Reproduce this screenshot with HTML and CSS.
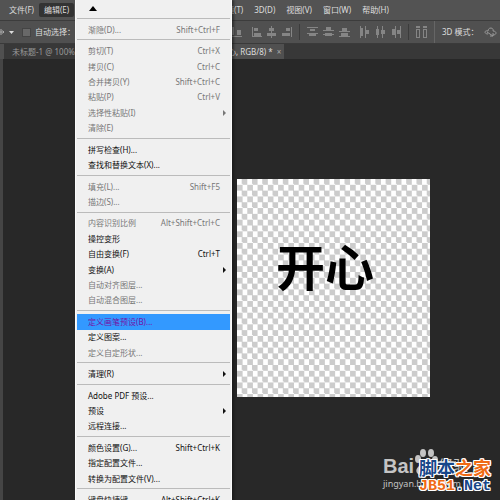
FILE: index.html
```html
<!DOCTYPE html>
<html lang="zh-CN">
<head>
<meta charset="utf-8">
<title>Photoshop</title>
<link rel="stylesheet" href="styles.css">
</head>
<body>
<div class="app">
  <nav class="menubar">
    <div class="lead">
      <button>文件(F)</button>
      <button class="open">编辑(E)</button>
    </div>
    <div class="rest">
      <button>镜(T)</button>
      <button>3D(D)</button>
      <button>视图(V)</button>
      <button>窗口(W)</button>
      <button>帮助(H)</button>
    </div>
  </nav>
  <div class="options">
    <div class="lead">
      <svg class="move" width="14" height="10" viewBox="0 0 14 10"><path d="M0 5h4M1 2v6M2.500 3.500L4 5L2.500 6.500" fill="none" stroke="#aaa"/><path d="M9 4h5l-2.500 3z" fill="#ddd"/></svg>
      <label><input type="checkbox">自动选择：</label>
    </div>
    <div class="rest tools">
      <svg width="10" height="12" viewBox="0 0 10 12"><path d="M0 1h2v8H0zM5 4h4v5H5zM0 10h10v1H0z"/></svg>
      <svg class="wide" width="10" height="12" viewBox="0 0 10 12"><path d="M0 1h1v10H0zM2 2h4v3H2zM2 7h7v3H2zM0 10h10v1H0z"/></svg>
      <svg width="10" height="12" viewBox="0 0 10 12"><path d="M4 0h1v12H4zM2 2h5v3H2zM0 7h9v3H0z"/></svg>
      <svg width="10" height="12" viewBox="0 0 10 12"><path d="M9 1h1v10H9zM4 2h4v3H4zM0 7h8v3H0z"/></svg>
      <i></i>
      <svg width="11" height="12" viewBox="0 0 11 12"><path d="M0 1h11v1H0zM3 3h5v2H3zM0 7h11v1H0zM2 8h7v2H2z"/></svg>
      <svg width="11" height="12" viewBox="0 0 11 12"><path d="M3 1h5v3H3zM0 4h11v1H0zM2 7h7v3H2zM0 8h11v1H0z"/></svg>
      <svg width="11" height="12" viewBox="0 0 11 12"><path d="M3 2h5v3H3zM0 5h11v1H0zM2 7h7v3H2zM0 10h11v1H0z"/></svg>
      <svg class="wide" width="9" height="12" viewBox="0 0 9 12"><path d="M0 0h1v12H0zM1 2h2v8H1zM5 0h1v12H5zM6 4h3v4H6z"/></svg>
      <svg class="gap" width="9" height="12" viewBox="0 0 9 12"><path d="M1 0h1v12H1zM0 3h3v6H0zM6 0h1v12H6zM5 4h4v4H5z"/></svg>
      <svg class="gap" width="9" height="12" viewBox="0 0 9 12"><path d="M3 0h1v12H3zM0 3h3v6H0zM8 0h1v12H8zM5 4h3v4H5z"/></svg>
      <i></i>
      <svg width="11" height="12" viewBox="0 0 11 12"><path d="M0 0h4v2H0zM7 0h4v2H7zM0 3h1v9H0zM3 3h1v9H3zM1 11h2v1H1zM1 3h2v1H1zM7 3h1v9H7zM10 3h1v9h-1zM8 11h2v1H8zM8 3h2v1H8z"/></svg>
      <i class="edge"></i>
      <span>3D 模式：</span>
      <svg width="13" height="12" viewBox="0 0 13 12"><path class="line" d="M4 8C0 8 0 4 4 5C4 1 10 1 9 5C13 5 13 9 9 9M3 6l6 4M6 10h3V7"/></svg>
      <svg width="13" height="12" viewBox="0 0 13 12"><circle class="line" cx="6" cy="6" r="5"/></svg>
    </div>
  </div>
  <div class="tabs">
    <div class="lead"><span>未标题-1 @ 100%</span></div>
    <div class="rest"><span class="tab">心, RGB/8) * <button aria-label="关闭">×</button></span></div>
  </div>
  <main class="workspace">
    <div class="canvas">开心</div>
  </main>

  <div class="menu">
    <div class="up"><svg width="8" height="5" viewBox="0 0 8 5"><path d="M0 5L4 0L8 5z"/></svg></div>
    <hr>
    <button disabled>渐隐(D)...<kbd>Shift+Ctrl+F</kbd></button>
    <hr>
    <button disabled>剪切(T)<kbd>Ctrl+X</kbd></button>
    <button disabled>拷贝(C)<kbd>Ctrl+C</kbd></button>
    <button disabled>合并拷贝(Y)<kbd>Shift+Ctrl+C</kbd></button>
    <button disabled>粘贴(P)<kbd>Ctrl+V</kbd></button>
    <button disabled class="sub">选择性粘贴(I)</button>
    <button disabled>清除(E)</button>
    <hr>
    <button>拼写检查(H)...</button>
    <button>查找和替换文本(X)...</button>
    <hr>
    <button disabled>填充(L)...<kbd>Shift+F5</kbd></button>
    <button disabled>描边(S)...</button>
    <hr>
    <button disabled>内容识别比例<kbd>Alt+Shift+Ctrl+C</kbd></button>
    <button>操控变形</button>
    <button>自由变换(F)<kbd>Ctrl+T</kbd></button>
    <button class="sub">变换(A)</button>
    <button disabled>自动对齐图层...</button>
    <button disabled>自动混合图层...</button>
    <hr>
    <button class="active">定义画笔预设(B)...</button>
    <button>定义图案...</button>
    <button disabled>定义自定形状...</button>
    <hr>
    <button class="sub">清理(R)</button>
    <hr>
    <button>Adobe PDF 预设...</button>
    <button class="sub">预设</button>
    <button>远程连接...</button>
    <hr>
    <button>颜色设置(G)...<kbd>Shift+Ctrl+K</kbd></button>
    <button>指定配置文件...</button>
    <button>转换为配置文件(V)...</button>
    <hr>
    <button>键盘快捷键...<kbd>Alt+Shift+Ctrl+K</kbd></button>
  </div>

  <div class="baidu">
    <div class="brand">Bai<svg width="24" height="28" viewBox="0 0 24 28"><ellipse cx="4" cy="11" rx="3" ry="4"/><ellipse cx="9" cy="5" rx="3" ry="4"/><ellipse cx="17" cy="5" rx="3" ry="4"/><ellipse cx="21" cy="12" rx="3" ry="4"/><path d="M12 11C8 11 8 16 4 19C0 23 4 28 8 27Q12 26 16 27C21 28 24 23 20 19C16 16 16 11 12 11z"/></svg><span>经验</span></div>
    <div>jingyan.baidu.com</div>
  </div>
  <div class="jb">
    <div class="zh">脚本<b>之家</b></div>
    <div class="en"><b>JB51</b>.Net</div>
  </div>
</div>
</body>
</html>
```
FILE: styles.css
```css
* { box-sizing: border-box; }
body {
  margin: 0;
  font: 8px/12px "Noto Sans", "Noto Sans CJK SC", sans-serif;
  color: #ddd;
  background: #282828;
}
button {
  font: inherit;
  color: inherit;
  background: none;
  border: 0;
  padding: 0;
  white-space: nowrap;
}
.app {
  position: relative;
  height: 100vh;
  overflow: hidden;
  display: flex;
  flex-direction: column;
}
.lead { flex: 0 0 232px; display: flex; align-items: center; }
.rest { flex: 1; display: flex; align-items: center; white-space: nowrap; overflow: hidden; }

.menubar { display: flex; height: 20px; background: #535353; }
.menubar .lead { flex-basis: 226px; padding-left: 9px; gap: 5px; }
.menubar .lead button { height: 14px; }
.menubar .open { background: #333; border-radius: 2px; padding: 0 5px; }
.menubar .rest { gap: 11px; }

.options {
  display: flex;
  height: 24px;
  background: #505050;
  border-top: 1px solid #3c3c3c;
  border-bottom: 1px solid #3a3a3a;
}
.options label { display: flex; align-items: center; gap: 4px; margin-left: 8px; }
.options input {
  appearance: none;
  width: 9px;
  height: 9px;
  margin: 0;
  background: #686868;
  border: 1px solid #444;
}
.tools { gap: 5px; }
.tools svg { flex: none; fill: #858585; }
.tools .line { fill: none; stroke: #999; }
.tools i { width: 1px; height: 16px; margin: 0 2px; background: #3c3c3c; flex: none; }
.tools .edge { height: 22px; background: #666; }
.tools .wide { margin-left: 5px; }
.tools .gap { margin-left: 2px; }

.tabs {
  display: flex;
  height: 15px;
  color: #999;
  background: #383838;
  border-left: 4px solid #505050;
}
.tabs .lead { flex-basis: 224px; padding-left: 8px; }
.tab {
  height: 15px;
  padding: 0 3px 0 0;
  line-height: 15px;
  color: #ddd;
  background: #505050;
}
.tab button { margin-left: 2px; color: #aaa; }

.workspace { flex: 1; border-left: 3px solid #454545; background: #282828; }
.canvas {
  width: 193px;
  height: 218px;
  margin: 120px 0 0 234px;
  padding: 50px 0 0 39px;
  font: 700 49px/72px "Noto Sans CJK SC", sans-serif;
  color: #000;
  background: repeating-conic-gradient(#ccc 0 25%, #fff 0 50%) 0 0 / calc(100% / 18.75) calc(100% / 18.75);
}

.menu {
  position: absolute;
  left: 75px;
  top: 0;
  width: 157px;
  height: calc(100vh + 8px);
  display: flex;
  flex-direction: column;
  color: #111;
  background: #f0f0f0;
  border: solid #fafafa;
  border-width: 0 1px;
  box-shadow: 2px 0 2px #1118;
}
.menu .up { height: 16px; padding: 6px 0 0 13px; line-height: 0; }
.menu hr { width: 153px; height: 1px; margin: 2px 1px 3px; border: 0; background: #bbb; }
.menu button {
  flex: 1 1 15px;
  display: flex;
  justify-content: space-between;
  align-items: center;
  padding: 0 11px 0 12px;
  text-align: left;
}
.menu button:disabled { color: #777; }
.menu .active { margin: 0 1px; padding: 0 10px 0 11px; color: #7414a8; background: #3399ff; }
.menu kbd { font: inherit; }
.menu .sub { padding-right: 5px; }
.menu .sub::after {
  content: "";
  border: solid transparent;
  border-width: 3px 0 3px 3px;
  border-left-color: currentColor;
}

.baidu {
  position: absolute;
  left: 383px;
  bottom: 10px;
  font: 9px/12px "Noto Sans", sans-serif;
  color: #c4c4c4;
}
.brand {
  display: flex;
  align-items: flex-end;
  margin-bottom: 2px;
  font: 700 20px/20px "Liberation Sans", "Noto Sans CJK SC", sans-serif;
}
.brand svg { fill: #c4c4c4; }
.brand span { font-size: 15px; font-weight: 400; }
.jb {
  position: absolute;
  left: 419px;
  bottom: 4px;
  color: #17478a;
  text-shadow: 1px 0 #fff, -1px 0 #fff, 0 1px #fff, 0 -1px #fff, 1px 1px #fff, -1px -1px #fff, 1px -1px #fff, -1px 1px #fff;
}
.jb b { color: #f06a14; font-weight: inherit; }
.zh { font: 700 18px/22px "Noto Sans CJK SC", sans-serif; }
.en { font: 700 15px/18px "Liberation Mono", monospace; }
```
